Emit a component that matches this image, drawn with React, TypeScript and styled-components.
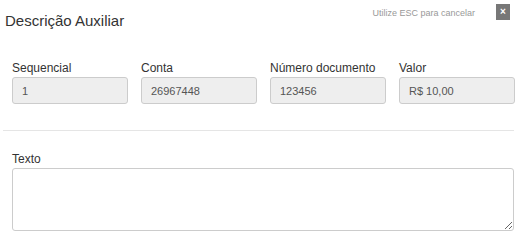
import React from "react";
import styled, { createGlobalStyle } from "styled-components";

const GlobalStyle = createGlobalStyle`
  html, body {
    margin: 0;
    padding: 0;
    background: #fff;
    font-family: "Liberation Sans", Arial, sans-serif;
  }
`;

const Modal = styled.div`
  width: 523px;
  height: 246px;
  box-sizing: border-box;
  background: #fff;
`;

const Header = styled.div`
  display: flex;
  align-items: flex-start;
  justify-content: space-between;
  height: 61px;
  padding: 0 13px 0 5px;
`;

const Title = styled.h4`
  margin: 12px 0 0;
  font-size: 15px;
  font-weight: normal;
  color: #333;
  line-height: 18px;
`;

const HeaderRight = styled.div`
  display: flex;
  align-items: flex-start;
  gap: 21px;
  padding-top: 4px;
`;

const Hint = styled.span`
  font-size: 9px;
  color: #999;
  margin-top: 4px;
`;

const CloseButton = styled.button`
  width: 14px;
  height: 16px;
  padding: 0;
  border: none;
  background: #777;
  color: #fff;
  font-size: 10px;
  font-weight: bold;
  line-height: 16px;
  display: flex;
  align-items: center;
  justify-content: center;
  cursor: pointer;
`;

const Body = styled.div`
  padding: 0 9px 0 12px;
`;

const FieldRow = styled.div`
  display: grid;
  grid-template-columns: repeat(4, 116px);
  column-gap: 13px;
`;

const Field = styled.div`
  display: flex;
  flex-direction: column;
`;

const Label = styled.label`
  font-size: 12px;
  color: #333;
  line-height: 14px;
  margin-bottom: 2px;
`;

const Input = styled.div`
  box-sizing: border-box;
  height: 27px;
  padding: 0 9px;
  border: 1px solid #ccc;
  border-radius: 3px;
  background: #eee;
  font-size: 11px;
  color: #555;
  display: flex;
  align-items: center;
`;

const Divider = styled.hr`
  border: none;
  border-top: 1px solid #e5e5e5;
  margin: 26px 9px 0 3px;
`;

const TextSection = styled.div`
  padding: 21px 9px 0 12px;
  display: flex;
  flex-direction: column;
`;

const TextArea = styled.textarea`
  box-sizing: border-box;
  width: 502px;
  height: 63px;
  border: 1px solid #ccc;
  border-radius: 3px;
  resize: vertical;
  font-family: inherit;
  font-size: 11px;
  margin: 0;
`;

const fields = [
  { label: "Sequencial", value: "1" },
  { label: "Conta", value: "26967448" },
  { label: "Número documento", value: "123456" },
  { label: "Valor", value: "R$ 10,00" },
];

export default function App() {
  return (
    <Modal>
      <GlobalStyle />
      <Header>
        <Title>Descrição Auxiliar</Title>
        <HeaderRight>
          <Hint>Utilize ESC para cancelar</Hint>
          <CloseButton>×</CloseButton>
        </HeaderRight>
      </Header>
      <Body>
        <FieldRow>
          {fields.map((f) => (
            <Field key={f.label}>
              <Label>{f.label}</Label>
              <Input>{f.value}</Input>
            </Field>
          ))}
        </FieldRow>
      </Body>
      <Divider />
      <TextSection>
        <Label>Texto</Label>
        <TextArea />
      </TextSection>
    </Modal>
  );
}
